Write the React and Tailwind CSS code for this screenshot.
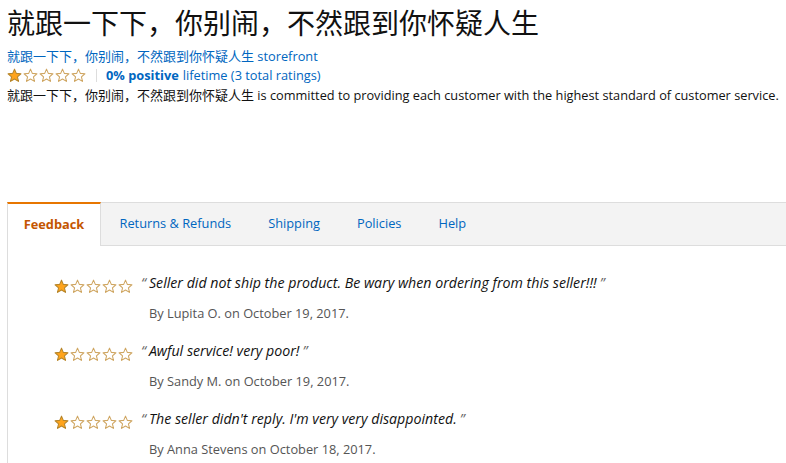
import React from "react";

const Star = ({ filled }) => (
  <svg width="15" height="15" viewBox="0 0 24 24" className="block shrink-0 mr-[1px]">
    <polygon
      points="12,1.8 14.9,8.6 22.3,9.2 16.7,14.1 18.4,21.4 12,17.5 5.6,21.4 7.3,14.1 1.7,9.2 9.1,8.6"
      fill={filled ? "#ffa41c" : "#ffffff"}
      stroke={filled ? "#b7862b" : "#cfa662"}
      strokeWidth="1.7"
      strokeLinejoin="round"
    />
  </svg>
);

const Stars = ({ count }) => (
  <div className="flex items-center">
    {[0, 1, 2, 3, 4].map((i) => (
      <Star key={i} filled={i < count} />
    ))}
  </div>
);

const reviews = [
  { text: "Seller did not ship the product. Be wary when ordering from this seller!!!", by: "Lupita O.", date: "October 19, 2017" },
  { text: "Awful service! very poor!", by: "Sandy M.", date: "October 19, 2017" },
  { text: "The seller didn't reply. I'm very very disappointed.", by: "Anna Stevens", date: "October 18, 2017" },
];

const tabs = ["Returns & Refunds", "Shipping", "Policies", "Help"];

export default function App() {
  return (
    <div className="w-[786px] h-[463px] overflow-hidden bg-white text-[#111] font-['Open_Sans','Noto_Sans_CJK_SC',sans-serif]">
      <div className="px-[7px]">
        <h1 className="h-[46px] text-[28px] leading-[44px] font-normal font-['Noto_Sans_CJK_SC',sans-serif]">
          就跟一下下，你别闹，不然跟到你怀疑人生
        </h1>
        <div className="text-[12.8px] leading-[19px] text-[#0066c0]">
          <span className="font-['Noto_Sans_CJK_SC',sans-serif] text-[13px]">就跟一下下，你别闹，不然跟到你怀疑人生</span> storefront
        </div>
        <div className="flex items-center h-[19px] text-[12.8px] text-[#0066c0]">
          <Stars count={1} />
          <span className="mx-[9px] h-[13px] w-px bg-[#ddd]"></span>
          <span className="font-bold">0% positive</span>
          <span className="ml-[4px]">lifetime (3 total ratings)</span>
        </div>
        <p className="text-[12.75px] leading-[19px] whitespace-nowrap">
          <span className="font-['Noto_Sans_CJK_SC',sans-serif] text-[13px]">就跟一下下，你别闹，不然跟到你怀疑人生</span> is committed to providing each customer with the highest standard of customer service.
        </p>
      </div>

      <div className="ml-[7px] mt-[97px]">
        <div className="flex h-[44px] border-t border-b border-[#ddd] bg-[#f3f3f3] text-[12.8px]">
          <div className="-mt-px -mb-px w-[94px] flex items-center justify-center bg-white border-t-2 border-t-[#e77600] border-l border-r border-[#ddd] font-bold text-[#c45500]">
            Feedback
          </div>
          {tabs.map((t) => (
            <div key={t} className="flex items-center px-[18.5px] text-[#0066c0]">
              {t}
            </div>
          ))}
        </div>

        <div className="border-l border-[#ddd] h-[300px] pl-[46px] pt-[26px]">
          {reviews.map((r) => (
            <div key={r.by} className="h-[68px]">
              <div className="flex items-start">
                <div className="pt-[7px]">
                  <Stars count={1} />
                </div>
                <p className="ml-[7px] text-[14.2px] leading-[22px] italic text-[#111] whitespace-nowrap">
                  <span className="text-[#666] mr-[3px]">“</span>
                  {r.text}
                  <span className="text-[#666] ml-[3px]">”</span>
                </p>
              </div>
              <div className="ml-[95px] mt-[10px] text-[12.8px] leading-[18px] text-[#555]">
                By {r.by} on {r.date}.
              </div>
            </div>
          ))}
        </div>
      </div>
    </div>
  );
}
